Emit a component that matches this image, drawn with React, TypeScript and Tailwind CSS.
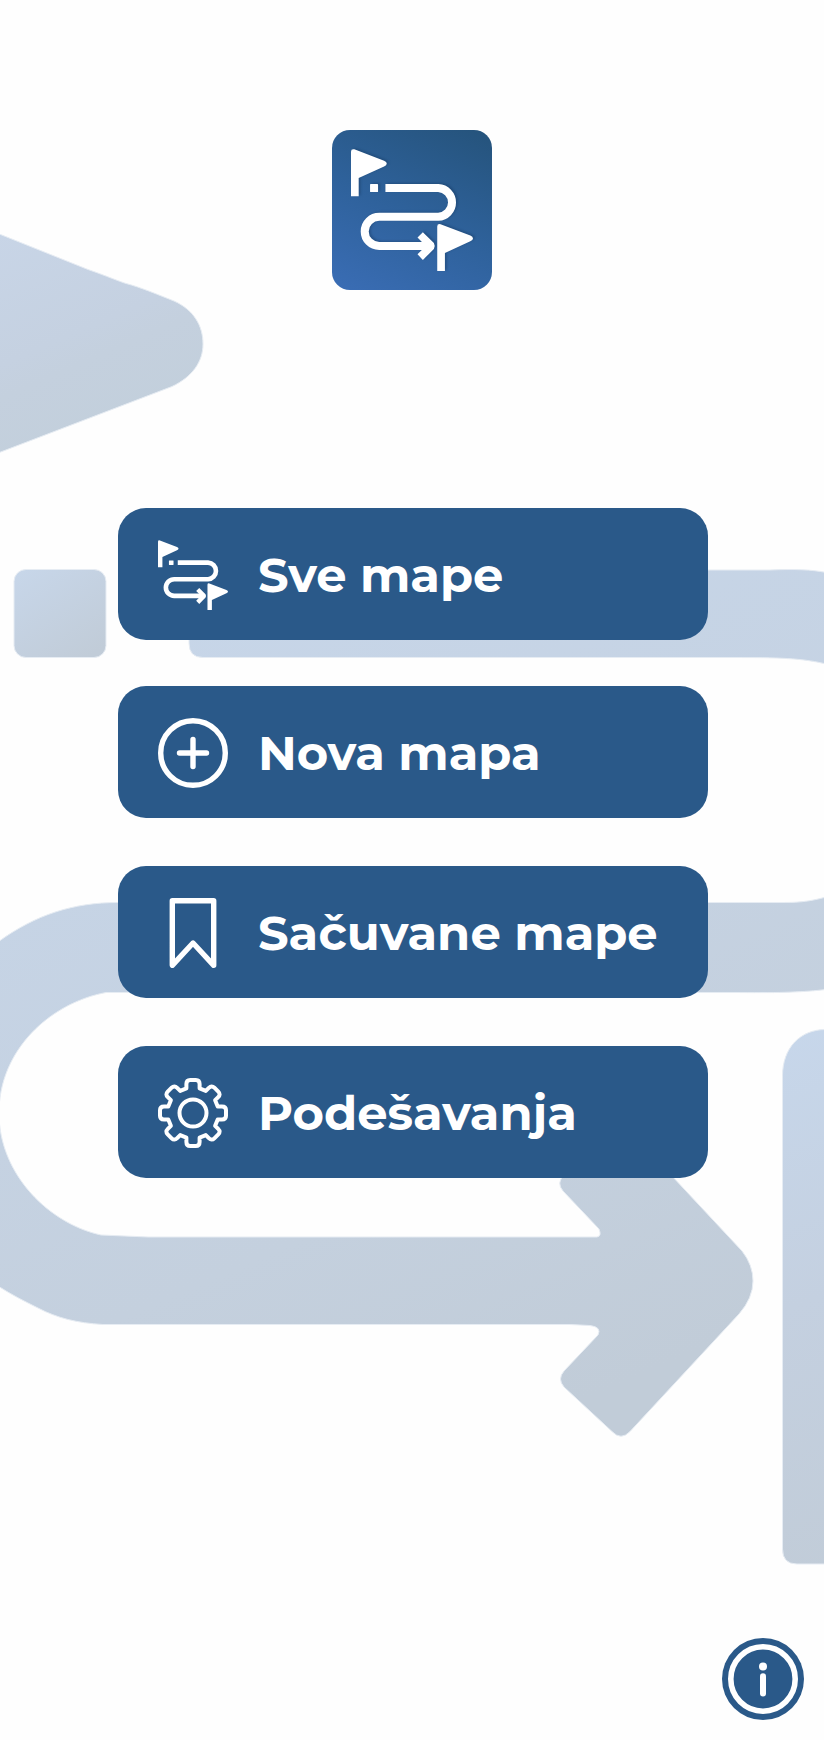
import React from 'react';

function RouteIcon({ className }: { className?: string }) {
  const flag = 'M0 141V8Q0-1 10 1L99 35Q107 38 107 43.500Q107 49 99 52L23 87V141Z';
  return (
    <svg viewBox="0 0 365 365" className={className} fill="currentColor" aria-hidden="true">
      <path d={flag} />
      <path d={flag} transform="translate(258 224)" />
      <rect x="57" y="105" width="24" height="24" rx="2" />
      <path
        d="M103 116.500H261A43.300 43.300 0 0 1 261 203H84.500A43.300 43.300 0 0 0 84.500 290H228"
        fill="none"
        stroke="currentColor"
        strokeWidth="24"
      />
      <path d="M199 265L215 249L248 281Q253 290 248 299L215 332L199 315L224 290Z" />
    </svg>
  );
}

function PlusIcon() {
  return (
    <svg viewBox="0 0 70 70" className="size-[70px]" fill="none" stroke="currentColor" strokeWidth="5.400" strokeLinecap="round" aria-hidden="true">
      <circle cx="35" cy="35" r="32.300" />
      <path d="M35 21.500V48.500M21.500 35H48.500" />
    </svg>
  );
}

function BookmarkIcon() {
  return (
    <svg viewBox="0 0 70 70" className="size-[70px]" fill="none" stroke="currentColor" strokeWidth="5.400" strokeLinejoin="round" aria-hidden="true">
      <path d="M14.300 2.700H55.700V67.300L35 45L14.300 67.300Z" />
    </svg>
  );
}

function gearPath() {
  const parts: string[] = [];
  for (let i = 0; i < 8; i++) {
    const a = (i * Math.PI) / 4;
    const p = (x: number, y: number) =>
      `${(35 + x * Math.cos(a) - y * Math.sin(a)).toFixed(2)} ${(35 + x * Math.sin(a) + y * Math.cos(a)).toFixed(2)}`;
    parts.push(
      `${i ? 'L' : 'M'}${p(-6.6, -24.7)}L${p(-6.6, -29)}Q${p(-6.6, -33)} ${p(-2.8, -33)}L${p(2.8, -33)}Q${p(6.6, -33)} ${p(6.6, -29)}L${p(6.6, -24.7)}`
    );
  }
  return parts.join('') + 'Z';
}

function GearIcon() {
  return (
    <svg viewBox="0 0 70 70" className="size-[70px]" fill="none" stroke="currentColor" strokeWidth="4" strokeLinejoin="round" aria-hidden="true">
      <path d={gearPath()} />
      <circle cx="35" cy="35" r="13.500" />
    </svg>
  );
}

function Backdrop() {
  return (
    <svg viewBox="0 0 824 1740" className="absolute inset-0 h-full w-full" aria-hidden="true">
      <defs>
        <linearGradient id="flagFill" gradientUnits="userSpaceOnUse" x1="20" y1="220" x2="120" y2="450">
          <stop offset="0" stopColor="#c8d5e7" />
          <stop offset="0.500" stopColor="#c5d1e1" />
          <stop offset="0.620" stopColor="#c4d0de" />
          <stop offset="1" stopColor="#c2cfdb" />
        </linearGradient>
        <linearGradient id="dotFill" x1="0.100" y1="0" x2="0.800" y2="1">
          <stop offset="0" stopColor="#c7d6e9" />
          <stop offset="1" stopColor="#c1ccd8" />
        </linearGradient>
        <linearGradient id="routeFill" gradientUnits="userSpaceOnUse" x1="190" y1="560" x2="560" y2="1410">
          <stop offset="0" stopColor="#c7d6e9" />
          <stop offset="0.500" stopColor="#c5d2e2" />
          <stop offset="0.720" stopColor="#c4d0de" />
          <stop offset="1" stopColor="#c1ccd8" />
        </linearGradient>
        <linearGradient id="poleFill" gradientUnits="userSpaceOnUse" x1="760" y1="1030" x2="960" y2="1530">
          <stop offset="0" stopColor="#c7d7eb" />
          <stop offset="0.500" stopColor="#c4d0e0" />
          <stop offset="1" stopColor="#c1ccd8" />
        </linearGradient>
      </defs>
      <g stroke="#e6ecf3" strokeWidth="1">
        <path
          fill="url(#flagFill)"
          d="M-2 233.500L88 269.500C108 276.500 118 281 126 283.500C140 287 160 295.500 174 301C194 310 203 326 203 344C203 362 192 377 172 386.500L-2 453Z"
        />
        <rect x="14" y="569.500" width="92" height="88" rx="12" fill="url(#dotFill)" />
        <path
          fill="url(#routeFill)"
          d="M203 570H770C793 569 812 569.500 826 572.500V664C806 659 785 657.500 740 657.500H203Q189 657.500 189 643V584Q189 570 203 570Z"
        />
        <path
          fill="url(#routeFill)"
          d="M826 897C812 901 800 902.500 785 902.500H118C73 902.500 35 915 -2 942V1286C12 1295 24 1301 38 1308C57 1318 77 1323 103 1324.500H570L590 1325.500Q602 1327 598 1335L564 1371Q557 1379 564 1387L612 1431.500Q621 1441 630 1431.500L739 1314Q753 1298 753 1281Q753 1265 742 1251L657 1160H575L564 1175Q556 1183 563 1191L599 1229Q602 1236 597 1237H148L101 1235C50 1224 -1 1175 -1 1113C-1 1050 50 1003 106 992.500H740C780 993 805 992 826 989.500Z"
        />
        <path
          fill="url(#poleFill)"
          d="M826 1029.500C800 1029.500 782.500 1048 782.500 1076V1549Q782.500 1564 797 1564H826Z"
        />
      </g>
    </svg>
  );
}

interface MenuEntry {
  label: string;
  icon: React.ReactNode;
  spacing: string;
}

const entries: MenuEntry[] = [
  { label: 'Sve mape', icon: <RouteIcon className="size-[70.500px]" />, spacing: '' },
  { label: 'Nova mapa', icon: <PlusIcon />, spacing: 'mt-[46px]' },
  { label: 'Sačuvane mape', icon: <BookmarkIcon />, spacing: 'mt-12' },
  { label: 'Podešavanja', icon: <GearIcon />, spacing: 'mt-12' },
];

export default function App() {
  return (
    <div className="relative h-[1740px] w-[824px] overflow-hidden bg-[#fefefe] font-['Montserrat','Inter',sans-serif]">
      <Backdrop />
      <main className="relative flex h-full flex-col pt-[130px]">
        <div className="ml-[332px] flex size-40 shrink-0 items-center justify-center rounded-[18px] bg-linear-[25deg,#3a6db5_0%,#2e619a_50%,#25537b_100%] text-white">
          <RouteIcon className="size-[122px] drop-shadow-[2px_-1px_1px_rgba(20,55,95,0.4)]" />
        </div>
        <nav className="mt-[218px] ml-[118px] flex w-[590px] flex-col">
          {entries.map((e) => (
            <button
              key={e.label}
              className={`flex h-[132px] w-full items-center rounded-[28px] bg-[#2a5989] pl-10 text-white ${e.spacing}`}
            >
              <span className="mt-0.5 flex size-[70px] shrink-0 items-center justify-center">{e.icon}</span>
              <span className="mt-0.5 ml-[30px] text-[48px] leading-[60px] font-bold whitespace-nowrap">{e.label}</span>
            </button>
          ))}
        </nav>
        <button aria-label="Info" className="mt-auto mr-5 mb-5 size-[82px] self-end">
          <svg viewBox="0 0 82 82" className="size-[82px]" aria-hidden="true">
            <circle cx="41" cy="41" r="41" fill="#2a5989" />
            <circle cx="41" cy="41" r="32.200" fill="none" stroke="#fff" strokeWidth="5.600" />
            <circle cx="41" cy="28.500" r="4" fill="#fff" />
            <path d="M41 38.300V55.500" stroke="#fff" strokeWidth="6" strokeLinecap="round" />
          </svg>
        </button>
      </main>
    </div>
  );
}
